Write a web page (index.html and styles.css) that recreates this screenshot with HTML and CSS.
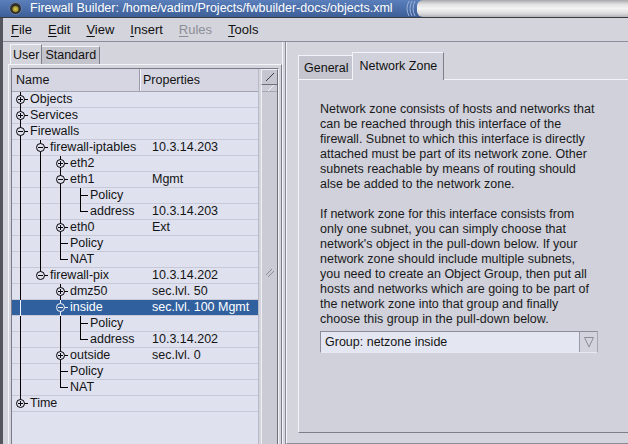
FILE: index.html
```html
<!DOCTYPE html>
<html>
<head>
<meta charset="utf-8">
<title>Firewall Builder</title>
<link rel="stylesheet" href="styles.css">
</head>
<body>
<div class="titlebar">
  <span class="wicon"></span>
  <span class="title">Firewall Builder: /home/vadim/Projects/fwbuilder-docs/objects.xml</span>
  <svg class="arcs" width="12" height="17" viewBox="0 0 12 17"><path d="M4 1 Q0 8.5 4 16 M7 1 Q3 8.5 7 16 M10 1 Q6 8.5 10 16" fill="none" stroke="#9fb4d8" stroke-width="1"/></svg>
  <span class="tgrey"></span>
</div>
<div class="frame">
  <div class="menubar">
    <span class="mi"><u>F</u>ile</span>
    <span class="mi"><u>E</u>dit</span>
    <span class="mi"><u>V</u>iew</span>
    <span class="mi"><u>I</u>nsert</span>
    <span class="mi dis"><u>R</u>ules</span>
    <span class="mi"><u>T</u>ools</span>
  </div>
  <div class="main">
    <div class="lpane">
      <div class="ltabs">
        <div class="ltab active">User</div>
        <div class="ltab">Standard</div>
      </div>
      <div class="lframe">
        <div class="treebox">
          <div class="tree">
            <div class="thead">
              <div class="hname">Name</div>
              <div class="hprop">Properties</div>
            </div>
            <div class="row"><div class="name"><span class="j tee"><span class="exp plus"></span></span><span class="lbl">Objects</span></div><div class="prop"></div></div>
            <div class="row"><div class="name"><span class="j tee"><span class="exp plus"></span></span><span class="lbl">Services</span></div><div class="prop"></div></div>
            <div class="row"><div class="name"><span class="j tee"><span class="exp minus"></span></span><span class="lbl">Firewalls</span></div><div class="prop"></div></div>
            <div class="row"><div class="name"><span class="ind p"></span><span class="j tee"><span class="exp minus"></span></span><span class="lbl">firewall-iptables</span></div><div class="prop">10.3.14.203</div></div>
            <div class="row"><div class="name"><span class="ind p"></span><span class="ind p"></span><span class="j tee"><span class="exp plus"></span></span><span class="lbl">eth2</span></div><div class="prop"></div></div>
            <div class="row"><div class="name"><span class="ind p"></span><span class="ind p"></span><span class="j tee"><span class="exp minus"></span></span><span class="lbl">eth1</span></div><div class="prop">Mgmt</div></div>
            <div class="row"><div class="name"><span class="ind p"></span><span class="ind p"></span><span class="ind p"></span><span class="j tee"></span><span class="lbl">Policy</span></div><div class="prop"></div></div>
            <div class="row"><div class="name"><span class="ind p"></span><span class="ind p"></span><span class="ind p"></span><span class="j end"></span><span class="lbl">address</span></div><div class="prop">10.3.14.203</div></div>
            <div class="row"><div class="name"><span class="ind p"></span><span class="ind p"></span><span class="j tee"><span class="exp plus"></span></span><span class="lbl">eth0</span></div><div class="prop">Ext</div></div>
            <div class="row"><div class="name"><span class="ind p"></span><span class="ind p"></span><span class="j tee"></span><span class="lbl">Policy</span></div><div class="prop"></div></div>
            <div class="row"><div class="name"><span class="ind p"></span><span class="ind p"></span><span class="j end"></span><span class="lbl">NAT</span></div><div class="prop"></div></div>
            <div class="row"><div class="name"><span class="ind p"></span><span class="j end"><span class="exp minus"></span></span><span class="lbl">firewall-pix</span></div><div class="prop">10.3.14.202</div></div>
            <div class="row"><div class="name"><span class="ind p"></span><span class="ind"></span><span class="j tee"><span class="exp plus"></span></span><span class="lbl">dmz50</span></div><div class="prop">sec.lvl. 50</div></div>
            <div class="row sel"><div class="name"><span class="ind p"></span><span class="ind"></span><span class="j tee"><span class="exp minus"></span></span><span class="lbl">inside</span></div><div class="prop">sec.lvl. 100 Mgmt</div></div>
            <div class="row"><div class="name"><span class="ind p"></span><span class="ind"></span><span class="ind p"></span><span class="j tee"></span><span class="lbl">Policy</span></div><div class="prop"></div></div>
            <div class="row"><div class="name"><span class="ind p"></span><span class="ind"></span><span class="ind p"></span><span class="j end"></span><span class="lbl">address</span></div><div class="prop">10.3.14.202</div></div>
            <div class="row"><div class="name"><span class="ind p"></span><span class="ind"></span><span class="j tee"><span class="exp plus"></span></span><span class="lbl">outside</span></div><div class="prop">sec.lvl. 0</div></div>
            <div class="row"><div class="name"><span class="ind p"></span><span class="ind"></span><span class="j tee"></span><span class="lbl">Policy</span></div><div class="prop"></div></div>
            <div class="row"><div class="name"><span class="ind p"></span><span class="ind"></span><span class="j end"></span><span class="lbl">NAT</span></div><div class="prop"></div></div>
            <div class="row"><div class="name"><span class="j end"><span class="exp plus"></span></span><span class="lbl">Time</span></div><div class="prop"></div></div>
          </div>
          <div class="vscroll">
            <div class="sbtn"><svg width="12" height="12" viewBox="0 0 12 12"><path d="M2 10 L10 2" stroke="#3c3c44" stroke-width="1"/></svg></div>
            <div class="slider">
              <div class="sbtn2"><svg width="12" height="6" viewBox="0 0 12 6"><path d="M4 6 L10 0" stroke="#f4f4f8" stroke-width="1"/></svg></div>
              <div class="grip"><svg width="12" height="12" viewBox="0 0 12 12"><path d="M2 8 L8 2 M4 10 L10 4" stroke="#8a8a96" stroke-width="1"/></svg></div>
            </div>
          </div>
        </div>
      </div>
    </div>
    <div class="splitter"></div>
    <div class="rpane">
      <div class="rtabs">
        <div class="rtab">General</div>
        <div class="rtab active">Network Zone</div>
      </div>
      <div class="rcontent">
        <p class="para">Network zone consists of hosts and networks that<br>can be reached through this interface of the<br>firewall. Subnet to which this interface is directly<br>attached must be part of its network zone. Other<br>subnets reachable by means of routing should<br>alse be added to the network zone.</p>
        <p class="para">If network zone for this interface consists from<br>only one subnet, you can simply choose that<br>network's object in the pull-down below. If your<br>network zone should include multiple subnets,<br>you need to create an Object Group, then put all<br>hosts and networks which are going to be part of<br>the network zone into that group and finally<br>choose this group in the pull-down below.</p>
        <div class="combo">
          <span class="ctext">Group: netzone inside</span>
          <span class="cbtn"><svg width="16" height="20" viewBox="0 0 16 20"><path d="M3.5 5.5 L12.5 5.5 L8 15 Z" fill="none" stroke="#8c8c98" stroke-width="1"/></svg></span>
        </div>
      </div>
    </div>
  </div>
</div>
</body>
</html>
```
FILE: styles.css
```css
html, body {
  margin: 0;
  padding: 0;
}
body {
  width: 628px;
  height: 444px;
  overflow: hidden;
  background: #d4d4dc;
  font-family: "Liberation Sans", Arial, sans-serif;
  font-size: 12.5px;
  color: #141414;
}

/* title bar */
.titlebar {
  height: 17px;
  display: flex;
  align-items: center;
  background: linear-gradient(#5a7fbb, #3d5f98);
  border-bottom: 1px solid #3a3a40;
}
.wicon {
  width: 11px;
  height: 11px;
  margin-left: 9px;
  border-radius: 50%;
  background: radial-gradient(circle at 50% 55%, #d8c850 0, #a89a30 30%, #2c2c2c 45%, #444 100%);
  border: 1px solid #6a7fa8;
}
.title {
  margin-left: 8px;
  color: #fff;
  white-space: nowrap;
  line-height: 17px;
}
.arcs {
  margin-left: 12px;
  flex: none;
}
.tgrey {
  flex: 1;
  align-self: stretch;
  border-radius: 6px 0 0 6px;
  background: linear-gradient(#a8a8ac 0, #e0e0e2 25%, #f4f4f4 50%, #dadadc 80%, #b4b4b8 100%);
}

/* window frame */
.frame {
  height: 426px;
  display: flex;
  flex-direction: column;
  border-left: 3px solid #55555d;
}

.menubar {
  height: 23px;
  display: flex;
  align-items: center;
  gap: 16px;
  padding-left: 8px;
  font-size: 13px;
  color: #111;
  border-bottom: 1px solid #8c8c9a;
}
.mi u {
  text-decoration: underline;
  text-underline-offset: 2px;
}
.mi.dis {
  color: #8e8e98;
}

.main {
  flex: 1;
  display: flex;
  min-height: 0;
}

/* left pane */
.lpane {
  width: 279px;
  display: flex;
  flex-direction: column;
}
.ltabs {
  height: 22px;
  display: flex;
  align-items: flex-end;
  padding-left: 7px;
}
.ltab {
  box-sizing: border-box;
  height: 18px;
  line-height: 17px;
  padding: 0 3px;
  background: #c3c3cc;
  border-top: 1px solid #f4f4f8;
  border-right: 1px solid #7e7e8a;
  color: #111;
}
.ltab.active {
  height: 20px;
  line-height: 20px;
  padding: 0 2px;
  background: #d4d4dc;
  border-left: 1px solid #f4f4f8;
}
.lframe {
  flex: 1;
  min-height: 0;
  margin-left: 5px;
  border-top: 1px solid #f4f4f8;
  border-left: 1px solid #f4f4f8;
  border-right: 1px solid #7e7e8a;
  padding: 3px 2px 0 2px;
  display: flex;
}
.treebox {
  flex: 1;
  display: flex;
  border-top: 1px solid #7a7a88;
  border-left: 1px solid #7a7a88;
  border-right: 1px solid #f4f4f8;
  background: #dfe1ef;
}
.tree {
  width: 246px;
  display: flex;
  flex-direction: column;
  background: #dfe1ef;
  border-right: 1px solid #b8bac8;
}
.thead {
  box-sizing: border-box;
  height: 23px;
  display: flex;
  background: #d5d6e2;
  border-bottom: 1px solid #a2a4b4;
  line-height: 22px;
}
.hname {
  width: 128px;
  box-sizing: border-box;
  padding-left: 4px;
  border-right: 1px solid #9a9aaa;
}
.hprop {
  flex: 1;
  padding-left: 2px;
  border-left: 1px solid #f4f4f8;
}

.row {
  box-sizing: border-box;
  height: 16px;
  display: flex;
  border-bottom: 1px solid #c7c9d8;
  line-height: 15px;
  white-space: nowrap;
}
.name {
  width: 128px;
  display: flex;
  height: 15px;
}
.prop {
  flex: 1;
  padding-left: 12px;
}
.ind, .j {
  position: relative;
  flex: none;
  height: 15px;
}
.ind {
  width: 20px;
}
.j {
  width: 18px;
}
.ind.p::before,
.j::before {
  content: "";
  position: absolute;
  left: 8px;
  top: 0;
  width: 1px;
  bottom: -1px;
  background: #000;
}
.j.end::before {
  bottom: auto;
  height: 8px;
}
.j::after {
  content: "";
  position: absolute;
  left: 8px;
  top: 7px;
  width: 8px;
  height: 1px;
  background: #000;
}
.exp {
  position: absolute;
  z-index: 1;
  left: 4px;
  top: 3px;
  width: 7px;
  height: 7px;
  border: 1px solid #000;
  border-radius: 50%;
  background: #dfe1ef;
}
.exp::before {
  content: "";
  position: absolute;
  left: 1px;
  top: 3px;
  width: 5px;
  height: 1px;
  background: #000;
}
.exp.plus::after {
  content: "";
  position: absolute;
  left: 3px;
  top: 1px;
  width: 1px;
  height: 5px;
  background: #000;
}
.lbl {
  padding-left: 0;
}

.row.sel {
  background: #31609e;
  color: #fff;
}
.row.sel .ind.p::before,
.row.sel .j::before,
.row.sel .j::after,
.row.sel .exp::before {
  background: #f4f4f8;
}
.row.sel .exp {
  border-color: #f4f4f8;
  background: #31609e;
}

/* scrollbar */
.vscroll {
  width: 19px;
  display: flex;
  flex-direction: column;
  background: #c8c8d2;
  border-left: 2px solid #d4d4dc;
  box-sizing: border-box;
}
.sbtn {
  height: 14px;
  border: 1px solid #6e6e7c;
  border-top-color: #f0f0f4;
  border-left-color: #f0f0f4;
  background: #c6c6d0;
  display: flex;
  align-items: center;
  justify-content: center;
}
.slider {
  flex: 1;
  display: flex;
  flex-direction: column;
  align-items: center;
  border-left: 1px solid #f0f0f4;
  border-right: 1px solid #6e6e7c;
  background: #cbcbd5;
}
.sbtn2 {
  height: 6px;
  width: 100%;
  display: flex;
  justify-content: center;
  border-bottom: 1px solid #a8a8b4;
}
.grip {
  margin-top: 175px;
}

/* splitter */
.splitter {
  width: 4px;
  border-left: 1px solid #f4f4f8;
  border-right: 1px solid #8a8a98;
  box-sizing: border-box;
}

/* right pane */
.rpane {
  flex: 1;
  min-width: 0;
  display: flex;
  flex-direction: column;
  border-left: 1px solid #f4f4f8;
  border-bottom: 1px solid #8a8a98;
  padding: 10px 0 10px 11px;
  overflow: hidden;
}
.rtabs {
  height: 27px;
  display: flex;
  align-items: flex-end;
}
.rtab {
  box-sizing: border-box;
  height: 24px;
  line-height: 25px;
  padding: 0 4px 0 5px;
  background: #c4c5cf;
  border-top: 1px solid #f4f4f8;
  border-left: 1px solid #f4f4f8;
  color: #111;
}
.rtab.active {
  height: 28px;
  line-height: 27px;
  margin-bottom: -1px;
  padding: 0 6px 0 6px;
  background: #d0d1da;
  border-right: 1px solid #7e7e8a;
  position: relative;
  z-index: 1;
}
.rcontent {
  flex: 1;
  margin-right: -12px;
  background: #d0d1da;
  border-top: 1px solid #f4f4f8;
  border-left: 1px solid #f4f4f8;
  border-bottom: 1px solid #7e7e8a;
  padding: 22px 0 0 21px;
}
.para {
  margin: 0 0 15px 0;
  line-height: 15px;
  white-space: nowrap;
  color: #1a1a1a;
}
.para + .para {
  margin-bottom: 4px;
}
.combo {
  box-sizing: border-box;
  width: 278px;
  height: 22px;
  display: flex;
  border: 1px solid #8c8c9c;
  border-right-color: #a8a8b4;
  border-bottom-color: #e8e8ee;
  background: #e4e6f2;
}
.ctext {
  flex: 1;
  padding-left: 4px;
  line-height: 20px;
}
.cbtn {
  width: 17px;
  display: flex;
  align-items: center;
  justify-content: center;
  background: #d2d3dc;
  border-left: 1px solid #9a9aa8;
}
```
